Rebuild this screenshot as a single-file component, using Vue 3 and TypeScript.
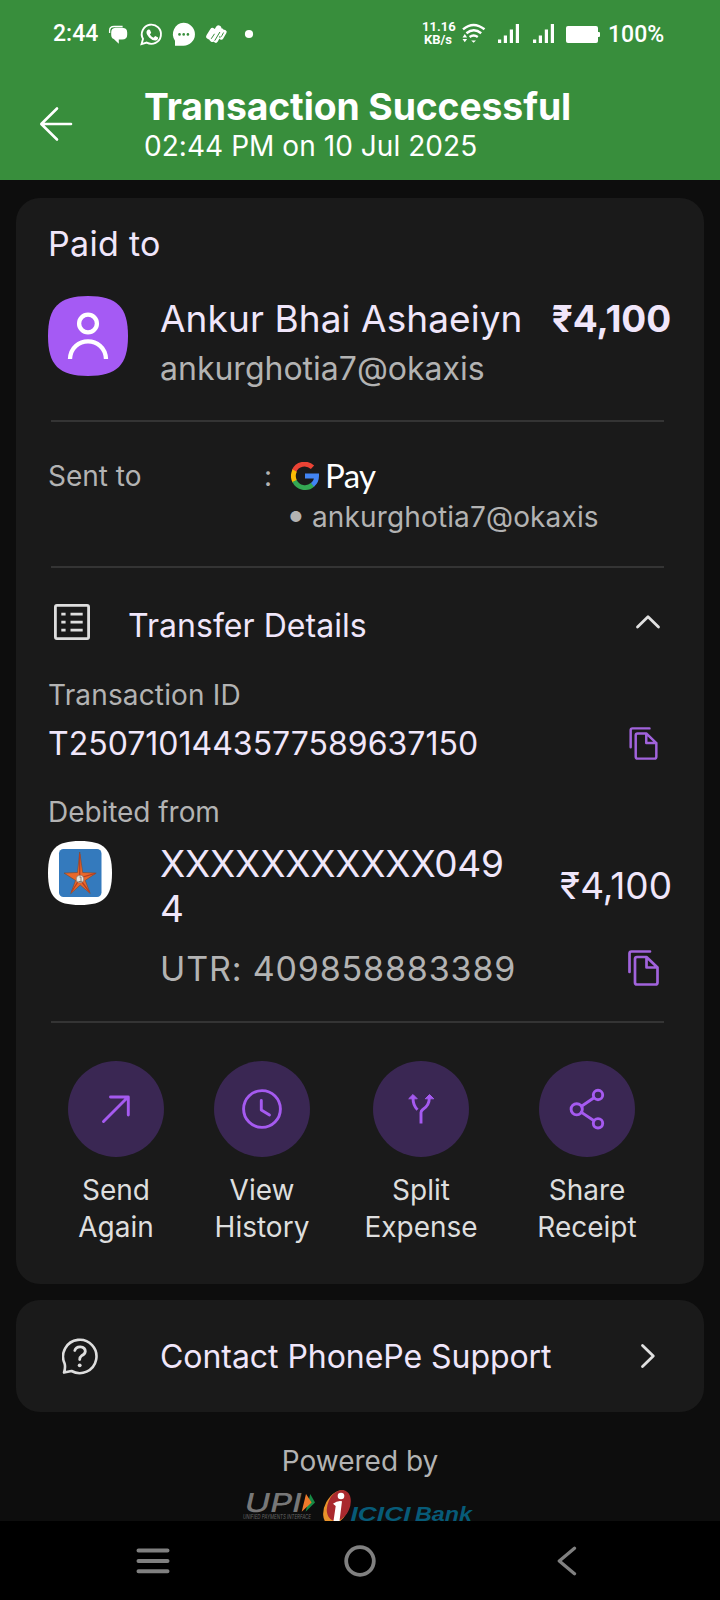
<script setup lang="ts">
interface Action {
  icon: 'send' | 'history' | 'split' | 'share'
  first: string
  second: string
}

const actions: Action[] = [
  { icon: 'send', first: 'Send', second: 'Again' },
  { icon: 'history', first: 'View', second: 'History' },
  { icon: 'split', first: 'Split', second: 'Expense' },
  { icon: 'share', first: 'Share', second: 'Receipt' },
]
</script>

<template>
  <div class="screen">
    <header class="top">
      <div class="status">
        <span class="clock">2:44</span>
        <svg class="notif" width="150" height="30" viewBox="105 20 150 30" fill="#fff">
          <path d="M109.600 33v-2.500q0-4 4.500-4h8.500" fill="none" stroke="#fff" stroke-width="1.300" />
          <path d="M115.500 27.800h7q4.700.4 4.700 4.600v2.300q0 4.600-5 4.800h-3.400v4.200l-5-4.600q-2.600-1-2.600-4.400v-2.300q0-4.200 4.300-4.600z" />
          <path d="M141.500 44.200l1.500-5.300a9.600 9.600 0 1 1 3.700 3.700z" fill="none" stroke="#fff" stroke-width="1.900" />
          <path d="M148.200 29.600l1.700.1 1.300 3-1.300 1.800q1.300 2.300 3.600 3.200l1.700-1.700 2.900 1.500q.1 2.700-2.500 3-3.200.2-6.200-2.800-3.200-3.200-2.900-5.900.3-1.500 1.700-2.200z" />
          <path d="M183.500 22.800a11.400 11.400 0 1 1 0 22.900h-8.500v-5a11.400 11.400 0 0 1 8.500-17.900z" />
          <g fill="#388e3c"><circle cx="179.500" cy="34.400" r="1.300" /><circle cx="183.700" cy="34.400" r="1.300" /><circle cx="187.900" cy="34.400" r="1.300" /></g>
          <g fill="none" stroke="#fff" stroke-linecap="round">
            <path d="M209 36.500l3.600-5.700M212.200 39l6.300-10.800" stroke-width="5.600" />
            <path d="M215.800 40.700l6-10.200M221.300 37.600l3.300-5.600" stroke-width="4.200" />
          </g>
          <path d="M211.200 38.800l3.300-5M214.700 40.700l5.200-8.700M219 36.500q1 2.300 2.800-.7l1.800-3.300" fill="none" stroke="#388e3c" stroke-width="1" />
          <circle cx="249" cy="34" r="4.100" />
        </svg>
        <span class="grow"></span>
        <span class="speed">11.16<br>KB/s</span>
        <svg class="radio" width="142" height="26" viewBox="460 21 142 26" fill="#fff">
          <g fill="none" stroke="#fff" stroke-width="2.400">
            <path d="M463 29.300q10.500-8.800 21.500 0M466.400 33.300q7.500-6 14.800 0M469.600 37q4-3 8.200 0" />
          </g>
          <path d="M471.200 40.500h4.800l-2.400 2.300zM462.500 37.500l2.300-3.400 2.300 3.400zM462.500 38.900l2.300 3.400 2.300-3.400z" />
          <path d="M498 39.500h3.200v3.500H498zM503.800 35.500h3.200V43h-3.200zM509.800 29.500h3.200V43h-3.200zM515.800 24h3.200v19h-3.200z" />
          <path d="M533 39.500h3.200v3.500H533zM538.800 35.500h3.200V43h-3.200zM544.800 29.500h3.200V43h-3.200zM550.800 24h3.200v19h-3.200z" />
          <rect x="566" y="26" width="32" height="17" rx="2" /><rect x="597" y="32" width="3" height="5" rx="1" />
        </svg>
        <span class="percent">100%</span>
      </div>
      <div class="bar">
        <svg class="back" width="36" height="38" viewBox="38 105 36 38" fill="none" stroke="#fff" stroke-width="2.600" stroke-linecap="round" stroke-linejoin="round">
          <path d="M71 124H41.500M57 108.500L41.300 124L57 139.500" />
        </svg>
        <div>
          <div class="title">Transaction Successful</div>
          <div class="date">02:44 PM on 10 Jul 2025</div>
        </div>
      </div>
    </header>

    <main class="card">
      <div class="paid">Paid to</div>
      <section class="payee">
        <svg class="avatar" width="80" height="80" viewBox="0 0 80 80">
          <path d="M0 40C0 11 11 0 40 0S80 11 80 40 69 80 40 80 0 69 0 40z" fill="#a55af4" />
          <g fill="none" stroke="#fff" stroke-width="4.300">
            <circle cx="40" cy="27.500" r="8.900" />
            <path d="M22 63C23 39.500 57 39.500 58 63" />
          </g>
        </svg>
        <div class="who">
          <div class="name">Ankur Bhai Ashaeiyn</div>
          <div class="vpa">ankurghotia7@okaxis</div>
        </div>
        <div class="amount bold">₹4,100</div>
      </section>
      <hr>
      <section class="sent">
        <span class="label sentlabel">Sent to</span>
        <span class="label colon">:</span>
        <div>
          <div class="gpay">
            <svg width="28" height="28" viewBox="0 0 28 28" fill="none" stroke-width="4.800">
              <path d="M2.900 9.300A11.600 11.600 0 0 1 21.500 5.300" stroke="#ea4335" />
              <path d="M3.700 19.300A11.600 11.600 0 0 1 3.700 8.700" stroke="#fbbc04" />
              <path d="M21.700 22.600A11.600 11.600 0 0 1 3.500 19" stroke="#34a853" />
              <path d="M14 14h11.600Q25.600 19.500 21.500 22.800" stroke="#4285f4" />
            </svg>
            <span class="pay">Pay</span>
          </div>
          <div class="handle"><span class="bullet">•</span><span class="label handle-text">ankurghotia7@okaxis</span></div>
        </div>
      </section>
      <hr>
      <section class="transfer">
        <svg width="36" height="36" viewBox="0 0 36 36" fill="none" stroke="#dedede">
          <rect x="1.400" y="1.400" width="33.200" height="33.200" rx="1.500" stroke-width="2.800" />
          <path d="M7.300 10.200h4.300M16.500 10.200h12.200M7.300 18.200h4.300M16.500 18.200h12.200M7.300 26.200h4.300M16.500 26.200h12.200" stroke-width="2.700" />
        </svg>
        <span class="transfer-title">Transfer Details</span>
        <svg class="chev" width="26" height="16" viewBox="0 0 26 16" fill="none" stroke="#e0e0e0" stroke-width="2.800" stroke-linecap="round" stroke-linejoin="round"><path d="M2.500 13L13 2.700L23.500 13" /></svg>
      </section>
      <div class="label txn-label">Transaction ID</div>
      <div class="txn">
        <span class="txn-id">T2507101443577589637150</span>
        <svg class="copy small" viewBox="0 0 31 36" fill="none" stroke="#a163dc" stroke-width="2.700" stroke-linecap="round" stroke-linejoin="round">
          <path d="M22 1.500H3.500Q1.500 1.500 1.500 3.500V22" /><path d="M18.500 7H9Q7 7 7 9v23.500q0 2 2 2h18.500q2 0 2-2V17.500zM18.500 7v10.500h11" />
        </svg>
      </div>
      <div class="label debit-label">Debited from</div>
      <section class="account">
        <svg class="bank" width="64" height="64" viewBox="0 0 64 64">
          <path d="M0 32C0 8 8 0 32 0S64 8 64 32 56 64 32 64 0 56 0 32z" fill="#fff" />
          <rect x="11" y="8" width="42.500" height="48" rx="4.500" fill="#347abd" />
          <path d="M31.700 11l3 20.500 13.500.6-11 7.300 5 13-10-8.400-9.500 8.700 4.800-13.300-11.500-7.300 13.500-.6z" fill="#e9682b" stroke="#75482f" stroke-width=".6" />
          <path d="M31.700 13v24l15.500-4.600M31.700 38l9.700 13M31.700 38l-8.300 13" fill="none" stroke="#b63e22" stroke-width="1.300" />
          <circle cx="32" cy="38" r="3.800" fill="#e8e5df" stroke="#77695e" stroke-width=".6" />
          <path d="M31.500 36h1.500v4.200M30.500 40.500h3.300" fill="none" stroke="#756a60" stroke-width=".9" />
        </svg>
        <div class="number">XXXXXXXXXXX049<br>4</div>
        <div class="amount debit">₹4,100</div>
      </section>
      <div class="utr">
        <span class="utr-text">UTR: 409858883389</span>
        <svg class="copy" viewBox="0 0 31 36" fill="none" stroke="#a163dc" stroke-width="2.700" stroke-linecap="round" stroke-linejoin="round">
          <path d="M22 1.500H3.500Q1.500 1.500 1.500 3.500V22" /><path d="M18.500 7H9Q7 7 7 9v23.500q0 2 2 2h18.500q2 0 2-2V17.500zM18.500 7v10.500h11" />
        </svg>
      </div>
      <hr>
      <nav class="actions">
        <div v-for="action in actions" :key="action.icon" class="action">
          <svg width="96" height="96" viewBox="0 0 96 96">
            <circle cx="48" cy="48" r="48" fill="#3a2753" />
            <g fill="none" stroke="#a55af0" stroke-width="2.900" stroke-linecap="round" stroke-linejoin="round">
              <path v-if="action.icon === 'send'" d="M35.500 60.500L60 36M42.500 36H60.300V54" />
              <template v-else-if="action.icon === 'history'">
                <circle cx="48" cy="48" r="18.400" /><path d="M47.300 39.500V49L55.500 54" />
              </template>
              <template v-else-if="action.icon === 'split'">
                <path d="M48 62.500V51.500Q48 49.800 49.800 48.500Q56.300 44.500 56.300 37M40 37Q40 44.500 44.500 48.700" stroke-linecap="butt" />
                <path d="M36 37.500L40 33.500L44 37.500zM52.500 37.500L56.500 33.500L60.500 37.500z" fill="#a55af0" stroke-width="1" />
              </template>
              <template v-else>
                <circle cx="37.700" cy="48.300" r="5.600" /><circle cx="59" cy="34" r="4.700" /><circle cx="59" cy="62.300" r="4.700" />
                <path d="M42.500 45.200L55 36.700M42.500 51.400L55 59.700" />
              </template>
            </g>
          </svg>
          <div class="caption">{{ action.first }}<br>{{ action.second }}</div>
        </div>
      </nav>
    </main>

    <section class="card support">
      <svg width="38" height="38" viewBox="0 0 38 38" fill="none" stroke="#dedede" stroke-width="2.600" stroke-linecap="round" stroke-linejoin="round">
        <path d="M2.600 26.500A16.700 16.700 0 1 1 9.500 34L2 35.600Q3.700 30.500 2.600 26.500z" />
        <path d="M12.800 13.500Q13.800 9.700 18.300 9.800Q23.300 10.300 23.300 14.300Q23.100 17 19.500 18.800Q17.700 20 17.700 22.500" stroke-width="2.800" />
        <circle cx="17.700" cy="28.300" r="1.900" fill="#dedede" stroke="none" />
      </svg>
      <span class="support-text">Contact PhonePe Support</span>
      <svg class="right" width="16" height="26" viewBox="0 0 16 26" fill="none" stroke="#e0e0e0" stroke-width="2.800" stroke-linecap="round" stroke-linejoin="round"><path d="M2.500 2.500L13.300 13L2.500 23.500" /></svg>
    </section>

    <footer class="powered">
      <div class="label">Powered by</div>
      <svg class="logos" width="240" height="34" viewBox="240 1487 240 34">
        <text class="upi" transform="translate(243 1512) skewX(-13)" textLength="57" lengthAdjust="spacingAndGlyphs">UPI</text>
        <path d="M310.300 1494L315 1502.600L305.600 1511.700z" fill="#168a45" />
        <path d="M306 1494L311.600 1502.600L301.700 1511.700z" fill="#ee792b" />
        <text class="upi-sub" x="243" y="1518.800" textLength="68" lengthAdjust="spacingAndGlyphs">UNIFIED PAYMENTS INTERFACE</text>
        <ellipse cx="336.500" cy="1507.500" rx="11.500" ry="18.500" transform="rotate(28 336.500 1507.500)" fill="#e8922b" />
        <ellipse cx="338.800" cy="1505.500" rx="11" ry="16.200" transform="rotate(24 338.800 1505.500)" fill="#a9292e" />
        <circle cx="341" cy="1496" r="3.300" fill="#fff" />
        <path d="M333 1503.800q4.500-3.500 9-2.500l-2.500 19.700h-6l2.200-15z" fill="#fff" />
        <text class="icici" x="350.500" y="1520.700" textLength="60" lengthAdjust="spacingAndGlyphs">ICICI</text>
        <text class="icici" x="415" y="1520.700" textLength="57" lengthAdjust="spacingAndGlyphs">Bank</text>
      </svg>
    </footer>

    <nav class="system">
      <svg width="34" height="28" viewBox="0 0 34 28" stroke="#808080" stroke-width="4" stroke-linecap="round"><path d="M2.500 3.500h29M2.500 14h29M2.500 24.300h29" /></svg>
      <svg class="home" width="32" height="32" viewBox="0 0 32 32" fill="none" stroke="#808080" stroke-width="3.800"><circle cx="16" cy="16" r="13.800" /></svg>
      <svg width="20" height="30" viewBox="0 0 20 30" fill="none" stroke="#808080" stroke-width="3.300" stroke-linecap="round" stroke-linejoin="round"><path d="M17.500 2.300L2.300 15L17.500 27.700" /></svg>
    </nav>
  </div>
</template>

<style>
body { margin: 0; background: #000; }
</style>

<style scoped>
.screen {
  width: 720px;
  height: 1600px;
  overflow: hidden;
  background: #0d0d0d;
  font-family: Inter, "Noto Sans", sans-serif;
  color: #f0e6fa;
  display: flex;
  flex-direction: column;
  white-space: nowrap;
}
svg { display: block; flex: none; }
.top { height: 180px; background: #388e3c; color: #fff; }
.status {
  height: 68px;
  box-sizing: border-box;
  padding: 0 58px 0 53px;
  display: flex;
  align-items: center;
  font-family: Roboto, sans-serif;
  font-weight: 500;
}
.clock { width: 52px; font-size: 23px; line-height: 28px; }
.notif { margin-top: 2px; }
.grow { flex: 1; }
.speed { width: 32px; text-align: center; font-size: 13px; line-height: 13px; font-weight: 700; margin: -3px 6px 0 0; }
.radio { margin-right: 6px; }
.percent { font-size: 23px; line-height: 28px; width: 54px; padding-top: 1px; }
.bar { height: 112px; display: flex; box-sizing: border-box; padding: 15px 0 0 38px; }
.back { margin: 22px 70px 0 0; }
.title { font-size: 37.300px; line-height: 48px; margin-bottom: -2px; font-weight: 700; letter-spacing: -0.1px; }
.date { font-size: 28px; line-height: 34px; letter-spacing: 0.05px; }
.card { margin: 18px 16px 0; border-radius: 24px; background: #1a1a1a; height: 1086px; box-sizing: border-box; padding: 26px 32px 0; flex: none; }
.paid { font-size: 34px; line-height: 40px; letter-spacing: 0.3px; }
.payee { display: flex; margin-top: 31px; height: 93px; }
.avatar { margin: 1px 32px 0 0; }
.who { flex: 1; }
.name { font-size: 37px; line-height: 48px; letter-spacing: 0.08px; }
.vpa { font-size: 32px; line-height: 42px; margin-top: 5px; color: #b3b3b3; }
.amount { font-size: 37px; line-height: 48px; }
.bold { font-weight: 700; letter-spacing: -0.1px; margin-right: 1px; }
hr { border: 0; height: 2px; background: #343434; margin: 32px 8px 0 3px; }
.label { font-size: 28px; line-height: 36px; color: #b3b3b3; }
.sent { display: flex; padding-top: 36px; height: 76px; }
.sentlabel { width: 216px; }
.colon { width: 27px; }
.gpay { display: flex; height: 41px; align-items: center; margin-top: -3px; margin-bottom: 3px; }
.pay { font-family: Lato, sans-serif; font-size: 33px; line-height: 40px; color: #fff; margin: -1px 0 0 6px; letter-spacing: -0.6px; }
.handle { display: flex; height: 36px; color: #b3b3b3; }
.handle-text { letter-spacing: 0.14px; }
.bullet { width: 26px; margin-left: -5px; font-size: 35px; line-height: 31px; }
.transfer { display: flex; padding: 36px 11px 0 6px; height: 44px; }
.transfer-title { font-size: 32px; line-height: 44px; margin-left: 38px; letter-spacing: 0.05px; flex: 1; }
.chev { margin-top: 10px; }
.txn-label { margin-top: 29px; letter-spacing: 0.15px; }
.txn { display: flex; justify-content: space-between; align-items: center; height: 40px; margin-top: 10px; padding-right: 14px; }
.txn-id { font-size: 32px; line-height: 40px; padding-top: 2px; }
.copy { width: 31px; height: 36px; }
.small { width: 29px; height: 33px; }
.debit-label { margin-top: 31px; letter-spacing: -0.05px; }
.account { display: flex; margin-top: 10px; height: 91px; }
.bank { margin-top: 1px; }
.number { font-size: 37px; line-height: 45px; margin: 1px 0 0 48px; letter-spacing: -0.2px; flex: 1; }
.debit { margin-top: 22px; }
.utr { display: flex; justify-content: space-between; align-items: center; height: 40px; margin-top: 17px; padding: 0 13px 1px 112px; }
.utr-text { font-size: 34px; line-height: 40px; padding-top: 2px; color: #b3b3b3; letter-spacing: 0.84px; }
.actions { display: grid; grid-template-columns: 146px 146px 172px 160px; margin: 38px 0 0 -5px; }
.action { display: flex; flex-direction: column; align-items: center; }
.caption { font-size: 28px; line-height: 37px; margin-top: 15px; color: #dedede; text-align: center; }
.support { margin-top: 16px; height: 112px; padding: 0 48px 0 46px; display: flex; align-items: center; }
.support-text { font-size: 32px; line-height: 40px; padding-top: 2px; margin-left: 60px; letter-spacing: -0.05px; flex: 1; }
.powered { flex: 1; min-height: 0; overflow: hidden; display: flex; flex-direction: column; align-items: center; padding-top: 31px; }
.logos { margin-top: 8px; }
.upi { font: 500 26px Inter, sans-serif; fill: #777; }
.upi-sub { font: italic 5.500px Inter, sans-serif; fill: #656565; }
.icici { font: italic 700 21px "Liberation Sans", sans-serif; fill: #075b78; }
.system { height: 79px; background: #000; display: flex; align-items: center; justify-content: space-between; padding: 0 143px 0 136px; flex: none; }
.home { margin-left: -7px; }
</style>
